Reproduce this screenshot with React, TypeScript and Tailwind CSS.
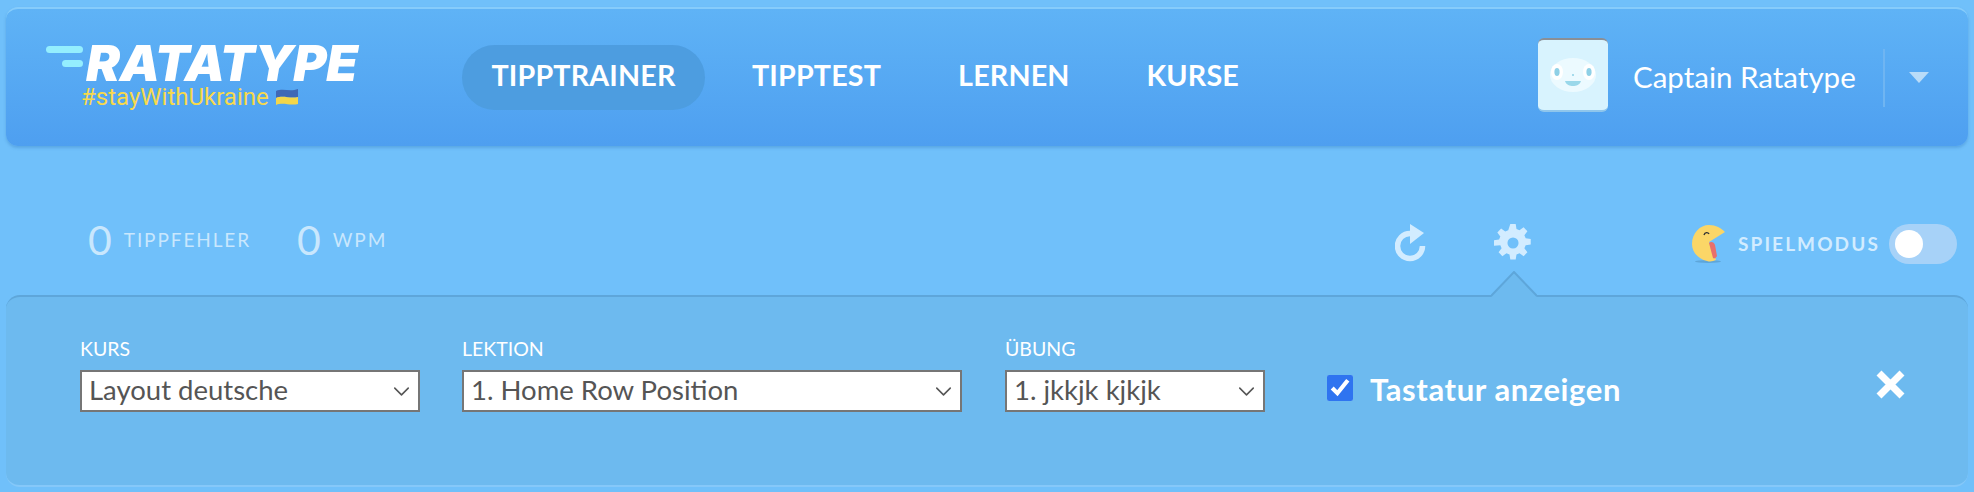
import { ChevronDown } from "lucide-react";

const font = "font-['Lato','Open_Sans',sans-serif]";

function Field({ label, value, width, gap }: { label: string; value: string; width: string; gap: string }) {
  return (
    <div className={`${width} ${gap} shrink-0`}>
      <div className="text-[19.5px] leading-[22px] text-white mb-[10px]">{label}</div>
      <div className="h-[42px] bg-white border-2 border-[#767676] pl-[7px] pr-[3px] flex items-center justify-between text-[#555]">
        <span className="text-[27.5px] leading-[34px] mt-[-3px] whitespace-nowrap">{value}</span>
        <ChevronDown className="w-[27px] h-[27px] shrink-0" strokeWidth={1.4} />
      </div>
    </div>
  );
}

function Logo() {
  return (
    <div className="w-[316px] shrink-0 mt-[-1px]">
      <div className="flex items-start">
        <div className="flex flex-col items-end gap-[7px] w-[37px] shrink-0">
          <div className="w-[37px] h-[7px] rounded-full bg-[#94eefe]" />
          <div className="w-[21px] h-[7px] rounded-full bg-[#94eefe]" />
        </div>
        <div className="ml-[3px] text-[49px] leading-[35px] font-black italic text-white font-['Inter',sans-serif] tracking-[-0.5px] [transform:scaleX(1.04)] origin-left">
          RATATYPE
        </div>
      </div>
      <div className="ml-[35px] mt-[5px] flex items-center gap-[6px]">
        <span className="text-[24px] leading-[22px] text-[#f7d94c] font-['Roboto',sans-serif]">#stayWithUkraine</span>
        <svg width="24" height="18" viewBox="0 0 24 18">
          <path d="M1 3c7-3 14 1 22-2v8c-8 2-15-2-22 1z" fill="#3f68b5" />
          <path d="M1 10c7-3 14 1 22-1v7c-8 2-15-2-22 1z" fill="#f3d64a" />
        </svg>
      </div>
    </div>
  );
}

function Avatar() {
  return (
    <div className="w-[70px] h-[74px] mt-[-5px] shrink-0 rounded-[6px] bg-[#d8f3fe] border-t-2 border-t-[#8a8f96] border-b-2 border-b-[#8fc6ec] flex items-center justify-center">
      <svg width="48" height="36" viewBox="0 0 48 36">
        <ellipse cx="24" cy="18" rx="23" ry="17" fill="#ecfaff" />
        <ellipse cx="8" cy="15" rx="6" ry="8" fill="#fff" />
        <ellipse cx="40" cy="15" rx="6" ry="8" fill="#fff" />
        <ellipse cx="8" cy="15" rx="2.6" ry="4" fill="#8fd0e6" />
        <ellipse cx="40" cy="15" rx="2.6" ry="4" fill="#8fd0e6" />
        <circle cx="24" cy="18" r="1" fill="#8fd0e6" />
        <path d="M16 24h16c-1 4-5 5-8 5s-7-1-8-5z" fill="#9ad8ea" />
      </svg>
    </div>
  );
}

export default function App() {
  return (
    <div className={`w-[1974px] h-[492px] overflow-hidden bg-[#70c0fa] px-[6px] pt-[7px] ${font}`}>
      {/* Header */}
      <header className="h-[139px] rounded-[12px] border-t-2 border-t-[#86ccfb] bg-gradient-to-b from-[#5fb3f6] to-[#4e9ff0] shadow-[0_2px_3px_rgba(50,120,190,0.35)] flex items-center pl-[40px]">
        <Logo />
        <nav className="flex items-center ml-[100px] text-[28.7px] font-bold tracking-[0.15px] text-white">
          <a className="h-[65px] w-[243px] pb-[4px] rounded-[33px] bg-[#4d9de0] flex items-center justify-center">TIPPTRAINER</a>
          <a className="ml-[47px] pb-[4px]">TIPPTEST</a>
          <a className="ml-[77px] pb-[4px]">LERNEN</a>
          <a className="ml-[77px] pb-[4px]">KURSE</a>
        </nav>
        <div className="ml-auto flex items-center">
          <Avatar />
          <span className="ml-[25px] text-[29.5px] text-white w-[250px]">Captain Ratatype</span>
          <div className="w-[2px] h-[58px] bg-[#6fb5f2]" />
          <svg className="ml-[24px] mr-[39px]" width="20" height="11" viewBox="0 0 20 11">
            <path d="M0 0h20L10 11z" fill="#b9dcf8" />
          </svg>
        </div>
      </header>

      {/* Stats and controls */}
      <div className="h-[149px] flex items-start pt-[78px] pl-[82px] relative">
        <div className="flex items-center text-[#c9e7fd] mt-[-3px]">
          <span className="text-[41px] leading-[38px]">0</span>
          <span className="ml-[12px] text-[19px] tracking-[1.9px]">TIPPFEHLER</span>
          <span className="ml-[46px] text-[41px] leading-[38px]">0</span>
          <span className="ml-[12px] text-[19px] tracking-[1.9px]">WPM</span>
        </div>
        <div className="ml-auto mr-[11px] flex items-center">
          <svg className="mt-[-3px]" width="31" height="38" viewBox="0 0 31 38">
            <path d="M15 9.5a12.5 12.5 0 1012.5 12.5" fill="none" stroke="#d2ecff" strokeWidth="5.5" />
            <path d="M15 0l14 9-14 11z" fill="#d2ecff" />
          </svg>
          <svg className="ml-[68px] mt-[-2px]" width="38" height="38" viewBox="0 0 24 24">
            <path
              fillRule="evenodd"
              d="M10.3 0h3.4l.5 3.2 1.9.8 2.6-1.9 2.4 2.4-1.9 2.6.8 1.9 3.2.5v3.4l-3.2.5-.8 1.9 1.9 2.6-2.4 2.4-2.6-1.9-1.9.8-.5 3.2h-3.4l-.5-3.2-1.9-.8-2.6 1.9-2.4-2.4 1.9-2.6-.8-1.9L0 13.7v-3.4l3.2-.5.8-1.9-1.9-2.6 2.4-2.4 2.6 1.9 1.9-.8zM12 8.5a3.5 3.5 0 100 7 3.5 3.5 0 000-7z"
              fill="#d2ecff"
            />
          </svg>
          <svg className="ml-[160px]" width="34" height="38" viewBox="0 0 34 38">
            <ellipse cx="16" cy="36.5" rx="13" ry="1.5" fill="#5ea6da" />
            <path d="M33 7L17 17l7 18c-3 1.500-6 2-9 1C6 34 0 27 0 19 0 8 8 0 17 0c7 0 12 3 16 7z" fill="#fbd667" />
            <path d="M17 18c2-2 5-1 6 2l2 11c-1 2-3 3-4 2z" fill="#e8706b" />
            <path d="M12 10c1-3 4-3 5-1" fill="none" stroke="#333" strokeWidth="1.4" />
          </svg>
          <span className="ml-[12px] w-[142px] text-[19px] font-bold tracking-[2.1px] text-[#d2ecff] whitespace-nowrap">SPIELMODUS</span>
          <div className="ml-[9px] w-[68px] h-[40px] rounded-full bg-[#a7d2f8] flex items-center pl-[6px]">
            <div className="w-[28px] h-[28px] rounded-full bg-white" />
          </div>
        </div>
      </div>

      {/* Settings panel */}
      <section className="relative h-[192px] rounded-[14px] bg-[#6dbaef] border-t-2 border-t-[#5ea6da] border-b-2 border-b-[#85c8f9] flex items-start pl-[74px] pt-[41px]">
        <svg className="absolute left-[1485px] top-[-26px]" width="46" height="26" viewBox="0 0 46 26">
          <path d="M0 26L23 1l23 25z" fill="#6dbaef" />
          <path d="M0 25L23 1l23 24" fill="none" stroke="#5ea6da" strokeWidth="2" />
        </svg>
        <Field label="KURS" value="Layout deutsche" width="w-[340px]" gap="mr-[42px]" />
        <Field label="LEKTION" value="1. Home Row Position" width="w-[500px]" gap="mr-[43px]" />
        <Field label="ÜBUNG" value="1. jkkjk kjkjk" width="w-[260px]" gap="mr-[62px]" />
        <label className="flex items-center mt-[31px]">
          <input type="checkbox" defaultChecked className="w-[26px] h-[26px] accent-[#2f74f0]" />
          <span className="ml-[17px] text-[31px] leading-[36px] mt-[2px] tracking-[0.6px] font-bold text-white">Tastatur anzeigen</span>
        </label>
        <svg className="absolute right-[62px] top-[72px]" width="31" height="31" viewBox="0 0 31 31">
          <path d="M4 4l23 23M27 4L4 27" stroke="#fff" strokeWidth="7" />
        </svg>
      </section>
    </div>
  );
}
